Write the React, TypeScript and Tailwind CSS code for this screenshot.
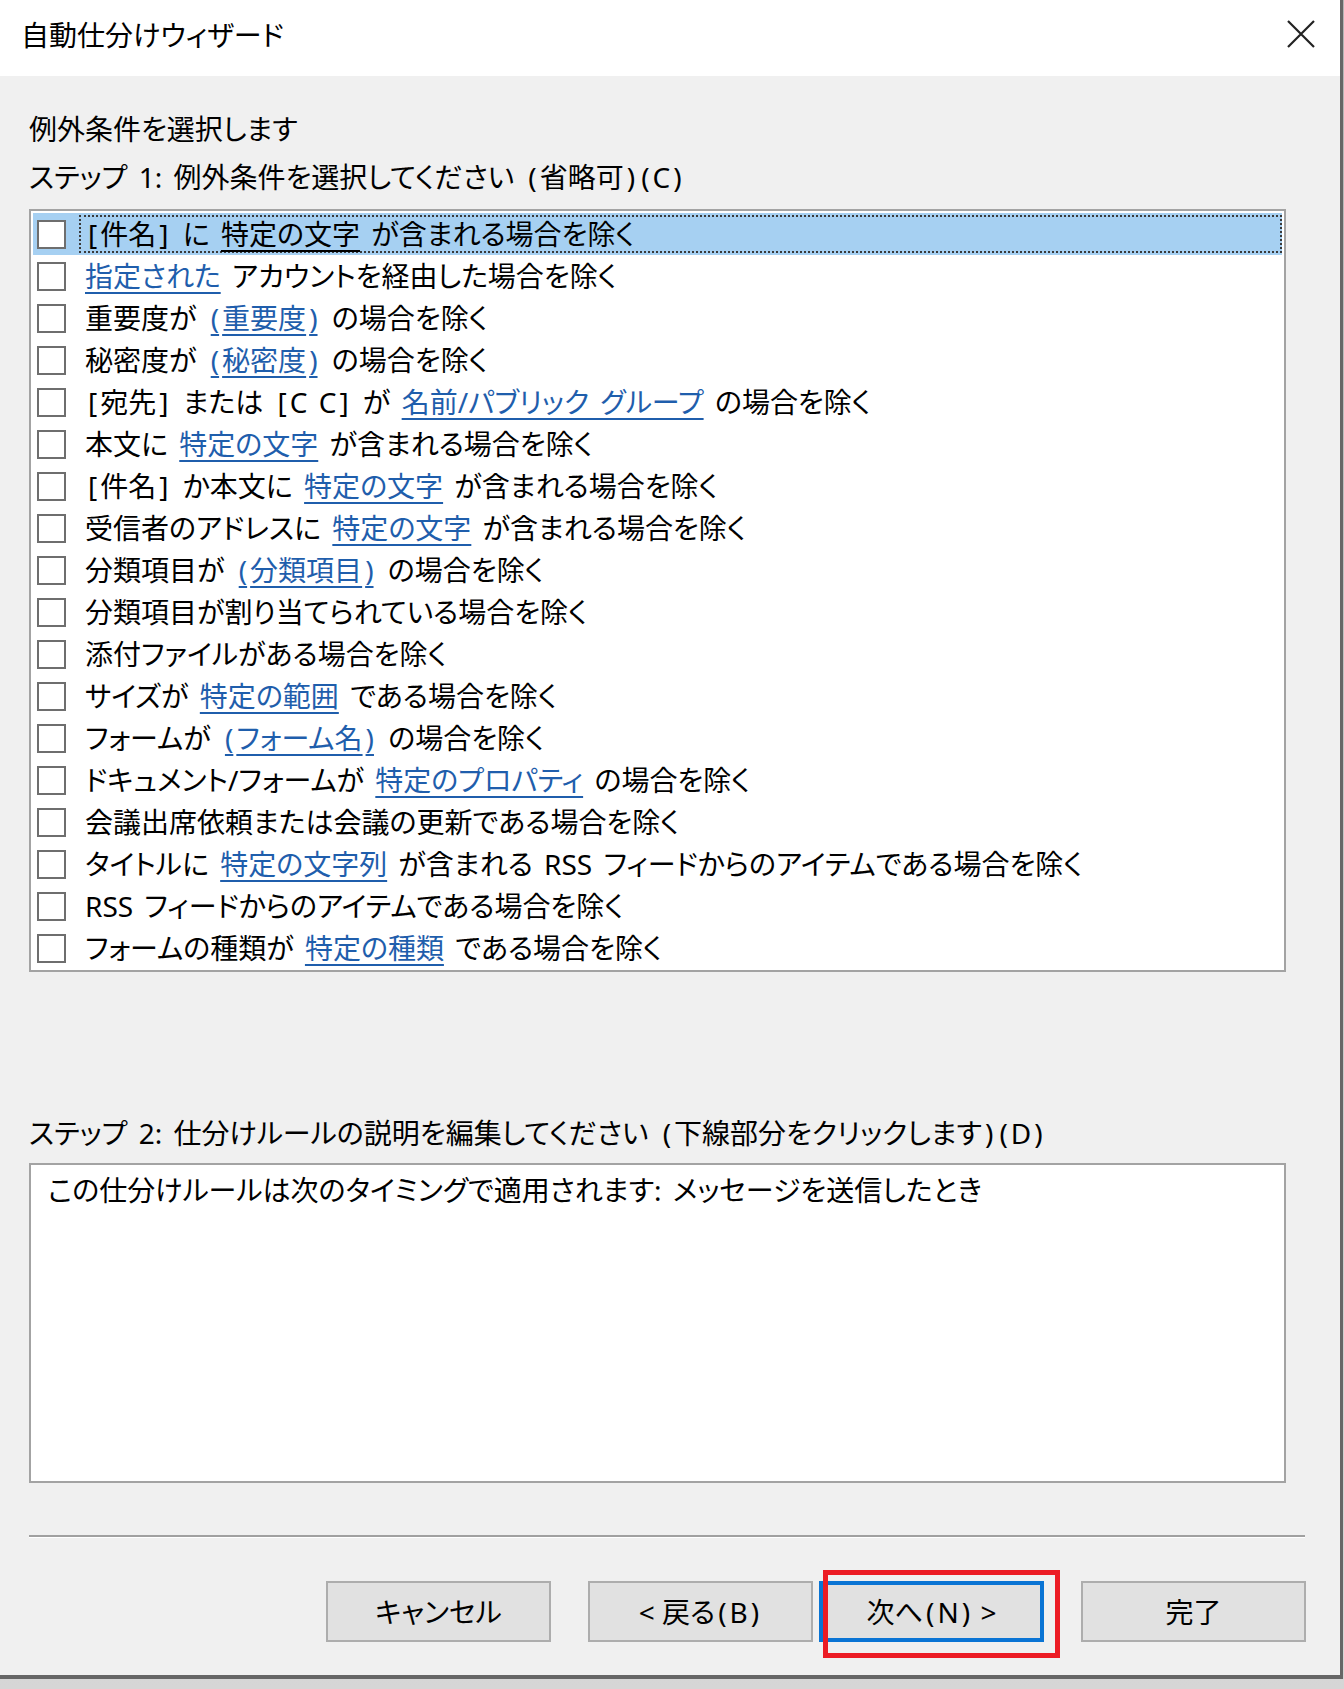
import React from "react";

type Seg = { t: string; link?: boolean };

const rows: Seg[][] = [
  [{ t: "[件名] に " }, { t: "特定の文字", link: true }, { t: " が含まれる場合を除く" }],
  [{ t: "指定された", link: true }, { t: " アカウントを経由した場合を除く" }],
  [{ t: "重要度が " }, { t: "(重要度)", link: true }, { t: " の場合を除く" }],
  [{ t: "秘密度が " }, { t: "(秘密度)", link: true }, { t: " の場合を除く" }],
  [{ t: "[宛先] または [C C] が " }, { t: "名前/パブリック グループ", link: true }, { t: " の場合を除く" }],
  [{ t: "本文に " }, { t: "特定の文字", link: true }, { t: " が含まれる場合を除く" }],
  [{ t: "[件名] か本文に " }, { t: "特定の文字", link: true }, { t: " が含まれる場合を除く" }],
  [{ t: "受信者のアドレスに " }, { t: "特定の文字", link: true }, { t: " が含まれる場合を除く" }],
  [{ t: "分類項目が " }, { t: "(分類項目)", link: true }, { t: " の場合を除く" }],
  [{ t: "分類項目が割り当てられている場合を除く" }],
  [{ t: "添付ファイルがある場合を除く" }],
  [{ t: "サイズが " }, { t: "特定の範囲", link: true }, { t: " である場合を除く" }],
  [{ t: "フォームが " }, { t: "(フォーム名)", link: true }, { t: " の場合を除く" }],
  [{ t: "ドキュメント/フォームが " }, { t: "特定のプロパティ", link: true }, { t: " の場合を除く" }],
  [{ t: "会議出席依頼または会議の更新である場合を除く" }],
  [{ t: "タイトルに " }, { t: "特定の文字列", link: true }, { t: " が含まれる RSS フィードからのアイテムである場合を除く" }],
  [{ t: "RSS フィードからのアイテムである場合を除く" }],
  [{ t: "フォームの種類が " }, { t: "特定の種類", link: true }, { t: " である場合を除く" }],
];

// brackets are a bit wider in the original UI font
const txt = (s: string) =>
  s.split(/([()[\]])/).map((p, i) =>
    /^[()[\]]$/.test(p) ? (
      <span key={i} className="px-[3px]">
        {p}
      </span>
    ) : (
      p
    )
  );

const Row = ({ segs, selected }: { segs: Seg[]; selected?: boolean }) => {
  return (
    <div className={"flex items-center h-[42px] " + (selected ? "bg-[#a6d0f2]" : "")}>
      <span className="ml-[4px] w-[29px] h-[29px] shrink-0 border-2 border-[#6e6e6e] bg-white" />
      <span
        className={
          "ml-[13px] flex-1 h-[38px] flex items-center pl-[4px] whitespace-pre border-2 border-dotted " +
          (selected ? "border-[#3a3a3a]" : "border-transparent")
        }
      >
        {segs.map((s, i) =>
          s.link ? (
            <span
              key={i}
              className={
                "underline decoration-2 underline-offset-[5px] " +
                (selected ? "text-black" : "text-[#1f5eac]")
              }
            >
              {txt(s.t)}
            </span>
          ) : (
            <span key={i}>{txt(s.t)}</span>
          )
        )}
      </span>
    </div>
  );
};

const Button = ({ label }: { label: string }) => (
  <button
    type="button"
    className="w-[225px] h-[61px] bg-[#e1e1e1] border-2 border-[#adadad] text-[28px] text-black"
  >
    {txt(label)}
  </button>
);

export default function App() {
  return (
    <div className="w-[1344px] h-[1689px] bg-gradient-to-b from-[#b4b4b4] to-[#d6d6d6] font-['Noto_Sans','Noto_Sans_CJK_JP',sans-serif] [font-feature-settings:'palt'] [word-spacing:4px] text-black">
      <div className="w-[1343px] h-[1679px] bg-[#f0f0f0] border-r-[3px] border-b-[4px] border-[#666666] flex flex-col">
        {/* title bar */}
        <div className="h-[76px] bg-white flex items-center justify-between pl-[21px] pr-[24px] shrink-0">
          <span className="text-[28px] leading-[40px] mt-[-6px]">自動仕分けウィザード</span>
          <svg width="30" height="30" viewBox="0 0 30 30" className="mt-[-8px]">
            <path d="M2 2 L28 28 M28 2 L2 28" stroke="#222" strokeWidth="2.2" fill="none" />
          </svg>
        </div>

        <div className="flex flex-col pl-[29px] pr-[34px] text-[28px]">
          <div className="mt-[31px] h-[44px] leading-[44px]">例外条件を選択します</div>
          <div className="mt-[4px] h-[44px] leading-[44px] whitespace-pre">
            {txt("ステップ 1: 例外条件を選択してください (省略可)(C)")}
          </div>

          <div className="mt-[10px] w-[1257px] h-[763px] bg-white border-2 border-[#a3a3a3] px-[2px] pt-[2px]">
            {rows.map((r, i) => (
              <Row key={i} segs={r} selected={i === 0} />
            ))}
          </div>

          <div className="mt-[139px] h-[44px] leading-[44px] whitespace-pre">
            {txt("ステップ 2: 仕分けルールの説明を編集してください (下線部分をクリックします)(D)")}
          </div>
          <div className="mt-[8px] w-[1257px] h-[320px] bg-white border-2 border-[#a3a3a3] pl-[17px] pt-[4px]">
            <div className="h-[42px] leading-[42px]">この仕分けルールは次のタイミングで適用されます: メッセージを送信したとき</div>
          </div>

          <div className="mt-[52px] w-[1276px] border-t-2 border-[#a0a0a0] border-b border-b-white" />

          <div className="mt-[43px] flex justify-end">
            <Button label="キャンセル" />
            <div className="ml-[37px]">
              <Button label="< 戻る(B)" />
            </div>
            <div className="ml-[6px] relative">
              <button
                type="button"
                className="w-[225px] h-[61px] bg-[#e1e1e1] border-[4px] border-[#0a74d4] text-[28px] text-black"
              >
                {txt("次へ(N) >")}
              </button>
              <div className="absolute left-[4px] top-[-11px] w-[237px] h-[88px] border-[5px] border-[#ec1c24]" />
            </div>
            <div className="ml-[37px]">
              <Button label="完了" />
            </div>
          </div>
        </div>
      </div>
    </div>
  );
}
